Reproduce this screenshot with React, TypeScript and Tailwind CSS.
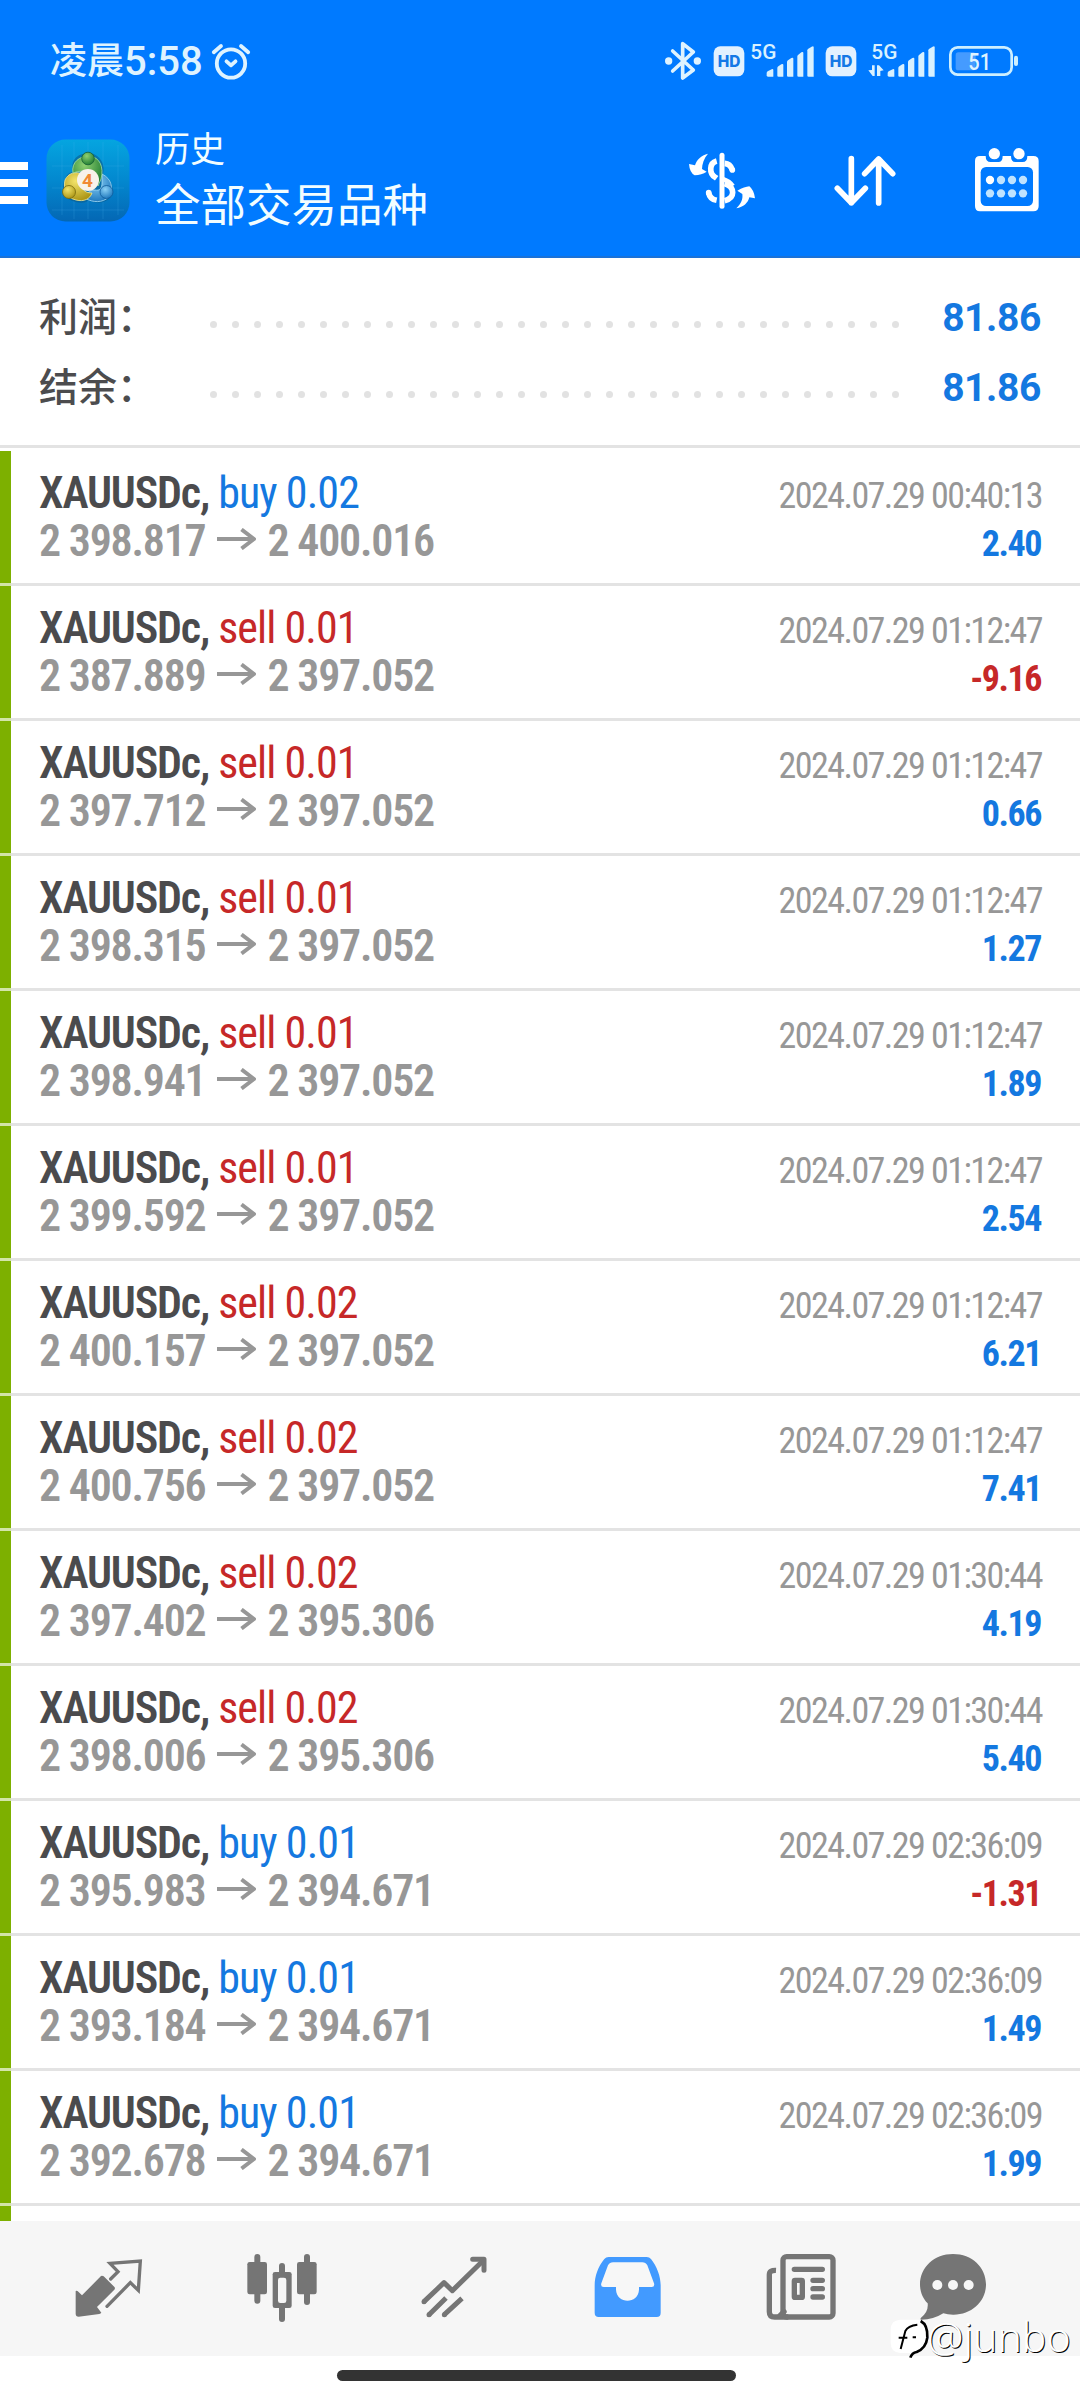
import { ReactNode } from "react";

const deals = [
	{ side: "buy", volume: "0.02", open: "2 398.817", close: "2 400.016", time: "2024.07.29 00:40:13", profit: "2.40" },
	{ side: "sell", volume: "0.01", open: "2 387.889", close: "2 397.052", time: "2024.07.29 01:12:47", profit: "-9.16" },
	{ side: "sell", volume: "0.01", open: "2 397.712", close: "2 397.052", time: "2024.07.29 01:12:47", profit: "0.66" },
	{ side: "sell", volume: "0.01", open: "2 398.315", close: "2 397.052", time: "2024.07.29 01:12:47", profit: "1.27" },
	{ side: "sell", volume: "0.01", open: "2 398.941", close: "2 397.052", time: "2024.07.29 01:12:47", profit: "1.89" },
	{ side: "sell", volume: "0.01", open: "2 399.592", close: "2 397.052", time: "2024.07.29 01:12:47", profit: "2.54" },
	{ side: "sell", volume: "0.02", open: "2 400.157", close: "2 397.052", time: "2024.07.29 01:12:47", profit: "6.21" },
	{ side: "sell", volume: "0.02", open: "2 400.756", close: "2 397.052", time: "2024.07.29 01:12:47", profit: "7.41" },
	{ side: "sell", volume: "0.02", open: "2 397.402", close: "2 395.306", time: "2024.07.29 01:30:44", profit: "4.19" },
	{ side: "sell", volume: "0.02", open: "2 398.006", close: "2 395.306", time: "2024.07.29 01:30:44", profit: "5.40" },
	{ side: "buy", volume: "0.01", open: "2 395.983", close: "2 394.671", time: "2024.07.29 02:36:09", profit: "-1.31" },
	{ side: "buy", volume: "0.01", open: "2 393.184", close: "2 394.671", time: "2024.07.29 02:36:09", profit: "1.49" },
	{ side: "buy", volume: "0.01", open: "2 392.678", close: "2 394.671", time: "2024.07.29 02:36:09", profit: "1.99" },
];

const summary = [
	{ label: "利润：", value: "81.86" },
	{ label: "结余：", value: "81.86" },
];

function AlarmIcon() {
	return (
		<svg className="h-10 w-10" viewBox="0 0 40 40" fill="none" stroke="#def3ff" strokeWidth="3.8" strokeLinecap="round" strokeLinejoin="round">
			<circle cx="20" cy="21.500" r="14.2" />
			<path d="M15.5 19.3l4.5 4 4.5-4M2.8 10.2L10 4M37.2 10.2L30 4" />
		</svg>
	);
}

function BluetoothIcon() {
	return (
		<svg className="h-10 w-[38px]" viewBox="27 18 114 120" fill="none" stroke="#def3ff" strokeWidth="11" strokeLinecap="round" strokeLinejoin="round">
			<path d="M53 48L115 105L83 129V26L115 51L53 108" />
			<circle cx="41" cy="78" r="5.500" fill="#def3ff" />
			<circle cx="127" cy="78" r="5.500" fill="#def3ff" />
		</svg>
	);
}

function HdBadge({ className }: { className: string }) {
	return (
		<svg className={`h-10 w-8 ${className}`} viewBox="0 18 96 120">
			<rect x="2" y="34" width="92" height="90" rx="20" fill="#e2f1ff" />
			<text x="48" y="95" textAnchor="middle" textLength="68" lengthAdjust="spacingAndGlyphs" className="font-['Inter',sans-serif] text-[46px] font-extrabold" fill="#1478e6">
				HD
			</text>
		</svg>
	);
}

function SignalBars() {
	return (
		<g fill="#d8f1ff">
			<path d="M0 121v-7q0-3 3-5l12-6q5-2 5 2v20H4q-4 0-4-4z" />
			<path d="M32 122V99q0-3 3-5l9-6q6-3 6 2v35H36q-4 0-4-3z" />
			<path d="M61 122V81q0-3 3-5l10-7q6-3 6 2v54H65q-4 0-4-3z" />
			<path d="M92 122V64q0-3 3-5l9-7q6-3 6 2v71H96q-4 0-4-3z" />
			<path d="M122 122V46q0-3 3-5l10-6q6-3 6 2v88h-15q-4 0-4-3z" />
		</g>
	);
}

function Signal() {
	return (
		<svg className="ml-[5px] h-10 w-[65px]" viewBox="285 18 195 120">
			<text x="286" y="72" textLength="78" lengthAdjust="spacingAndGlyphs" className="font-['Roboto',sans-serif] text-[60px] font-medium" fill="#d8f1ff">
				5G
			</text>
			<g transform="translate(335 0)">
				<SignalBars />
			</g>
		</svg>
	);
}

function SignalActive() {
	return (
		<svg className="ml-2.5 h-10 w-[69px]" viewBox="636 18 207 120">
			<text x="649" y="72" textLength="78" lengthAdjust="spacingAndGlyphs" className="font-['Roboto',sans-serif] text-[60px] font-medium" fill="#d8f1ff">
				5G
			</text>
			<path d="M640 106l11-1V91h8v32h-6zM666 91h6l14 15-10 2v15h-10z" fill="#d8f1ff" />
			<g transform="translate(698 0)">
				<SignalBars />
			</g>
		</svg>
	);
}

function Battery() {
	return (
		<svg className="ml-3 h-10 w-[71px]" viewBox="879 18 213 120">
			<rect x="886" y="37" width="184" height="82" rx="22" fill="none" stroke="#cdefff" strokeWidth="8" />
			<rect x="902" y="52" width="60" height="54" rx="8" fill="#459bff" />
			<rect x="1077" y="62" width="12" height="31" rx="6" fill="#cdefff" />
			<text x="974" y="105" textAnchor="middle" textLength="68" lengthAdjust="spacingAndGlyphs" className="font-['Roboto',sans-serif] text-[72px] font-medium" fill="#def3ff">
				51
			</text>
		</svg>
	);
}

function AppLogo() {
	return (
		<svg className="ml-[18px] h-[83px] w-[84px]" viewBox="0 0 84 83">
			<defs>
				<linearGradient id="tile" x1="0" y1="0" x2="0" y2="1">
					<stop offset="0" stopColor="#05a5e0" />
					<stop offset="0.5" stopColor="#0388cf" />
					<stop offset="1" stopColor="#0467b4" />
				</linearGradient>
				<radialGradient id="green" cx="0.4" cy="0.3" r="0.8">
					<stop offset="0" stopColor="#8fd070" />
					<stop offset="1" stopColor="#14742c" />
				</radialGradient>
				<radialGradient id="yellow" cx="0.4" cy="0.3" r="0.8">
					<stop offset="0" stopColor="#f3e36a" />
					<stop offset="1" stopColor="#a48d0c" />
				</radialGradient>
				<radialGradient id="blue" cx="0.4" cy="0.3" r="0.8">
					<stop offset="0" stopColor="#8bd0f5" />
					<stop offset="1" stopColor="#126fb8" />
				</radialGradient>
			</defs>
			<rect x="0.5" y="0.5" width="83" height="82" rx="19" fill="url(#tile)" />
			<path d="M6 27h72M6 49h72M6 71h72M16 6v70M28 3v77M42 3v77M57 3v77M72 6v70" stroke="#5cc4f2" strokeOpacity="0.18" fill="none" />
			{/* three figures holding the coin */}
			<path d="M42 42L27 32C24 20 33 14 43 14C54 15 60 26 57 36C67 41 68 50 65 57C60 65 50 65 43 61C38 65 32 64 27 62C17 60 15 48 19 40C21 34 26 32 30 33Z" fill="#0a5b8c" fillOpacity="0.6" />
			<path d="M43 61C36 60 42 50 49 51C54 52 56 49 56 44V35C66 40 67 49 64 56C60 63 50 64 43 61Z" fill="url(#blue)" stroke="#a5dcf7" strokeWidth="0.8" />
			<path d="M19 41C22 34 30 32 36 35L35 45C36 52 41 54 46 54C44 60 38 63 30 61C20 59 17 49 19 41Z" fill="url(#yellow)" stroke="#f4eb9a" strokeWidth="0.8" />
			<path d="M27 34C25 23 34 17 43 17C54 18 58 28 55 40L52 47C51 38 46 32 38 32Q31 32 27 34Z" fill="url(#green)" stroke="#a4dfa0" strokeWidth="0.8" />
			<circle cx="42" cy="19.5" r="6.3" fill="url(#green)" stroke="#175f35" strokeWidth="0.8" />
			<circle cx="23" cy="53" r="6.5" fill="url(#yellow)" stroke="#77690e" strokeWidth="0.8" />
			<circle cx="60.500" cy="53" r="6.5" fill="url(#blue)" stroke="#115c9b" strokeWidth="0.8" />
			<circle cx="42" cy="41" r="11" fill="#f7f2ea" />
			<text x="41.500" y="48" textAnchor="middle" className="font-['Roboto',sans-serif] text-[19px] font-bold" fill="#f08a34">
				4
			</text>
		</svg>
	);
}

function CurrencyIcon() {
	return (
		<svg className="h-[68px] w-[68px]" viewBox="24 18 204 204">
			<path d="M126 46V199" stroke="#fff" strokeWidth="15" strokeLinecap="round" />
			<path d="M110 63C87 69 87 101 106 112L110 115M134 70C146 71 153 78 157 89M134 131C166 142 166 174 134 182M86 158C88 170 95 178 110 181" fill="none" stroke="#fff" strokeWidth="17" />
			<path d="M126 116Q150 124 158 138" fill="none" stroke="#fff" strokeWidth="14" />
			<circle cx="157" cy="90" r="8.500" fill="#fff" />
			<circle cx="86" cy="158" r="8.500" fill="#fff" />
			<path d="M84 41C63 46 50 60 45 76L27 72Q29 98 44 106Q65 105 80 95L66 87C66 72 72 54 84 41Z" fill="#fff" />
			<path d="M169 205C184 190 189 178 187 162L172 152Q194 140 208 139Q222 150 225 175L208 172C204 189 191 201 169 205Z" fill="#fff" />
		</svg>
	);
}

function SortIcon() {
	return (
		<svg className="h-[68px] w-[62px]" viewBox="462 18 186 204" fill="none" stroke="#fff" strokeWidth="17" strokeLinecap="round" strokeLinejoin="round">
			<path d="M514 56V188M472 145L514 188L556 145M596 189V57M554 101L596 57L638 101" />
		</svg>
	);
}

function CalendarIcon() {
	const dots = [930, 963, 996, 1029];
	return (
		<svg className="h-[68px] w-[66px]" viewBox="882 18 198 204">
			<path d="M900 48H917Q917 66 932 66H955Q968 66 968 48H993Q993 66 1006 66H1028Q1042 66 1042 48H1060Q1076 48 1076 63V198Q1076 214 1060 214H900Q885 214 885 198V63Q885 48 900 48Z" fill="#fff" />
			<rect x="902" y="81" width="157" height="117" rx="16" fill="#007aff" />
			<circle cx="943" cy="41" r="17" fill="#fff" />
			<circle cx="1017" cy="41" r="17" fill="#fff" />
			{dots.map((x) => (
				<g key={x} fill="#bfe3ff">
					<circle cx={x} cy="120" r="12.500" fill={x === 930 ? "#fff" : "#bfe3ff"} />
					<circle cx={x} cy="160" r="12.500" />
				</g>
			))}
		</svg>
	);
}

function QuotesIcon() {
	return (
		<svg className="size-[70px]" viewBox="42 24 210 210">
			<path d="M123 93Q127 91 131 94L164 127Q166 131 163 134L111 186L124 203Q122 206 118 207L56 215Q47 215 47 206V138Q51 136 55 140L66 151Z" fill="#757575" />
			<path d="M152 102L174 80L150 55L241 48L235 136L211 113L141 184" fill="none" stroke="#757575" strokeWidth="10" strokeLinejoin="miter" strokeLinecap="round" />
		</svg>
	);
}

function ChartIcon() {
	return (
		<svg className="size-[70px]" viewBox="558 24 210 210">
			<g fill="#757575">
				<rect x="559" y="51" width="59" height="97" rx="7" />
				<rect x="580" y="27" width="18" height="149" rx="9" />
				<rect x="708" y="51" width="59" height="97" rx="7" />
				<rect x="729" y="27" width="18" height="153" rx="9" />
				<rect x="635" y="81" width="57" height="108" rx="7" />
				<rect x="654" y="54" width="18" height="177" rx="9" />
			</g>
			<rect x="651" y="98" width="25" height="76" rx="7" fill="#f6f6f6" />
		</svg>
	);
}

function TradeIcon() {
	return (
		<svg className="size-[70px]" viewBox="1080 24 210 210" fill="none" stroke="#757575" strokeWidth="15" strokeLinejoin="round">
			<path d="M1092 170L1152 113L1177 137L1272 44M1107 209L1158 159M1153 209L1206 160" />
			<path d="M1238 43H1272V76" strokeLinecap="round" />
			<g fill="#757575" stroke="none">
				<circle cx="1092" cy="170" r="7.500" />
				<circle cx="1107" cy="209" r="7.500" />
				<circle cx="1153" cy="209" r="7.500" />
			</g>
		</svg>
	);
}

function HistoryIcon() {
	return (
		<svg className="size-[70px]" viewBox="39 24 210 210">
			<path d="M86 36H200Q208 36 213 42C231 64 242 95 242 121V203Q242 216 230 216H56Q44 216 44 203V121C44 95 54 64 73 42Q78 36 86 36Z" fill="#429aff" />
			<path d="M99 52H187Q197 52 202 61L222 115Q225 126 215 126H177V134C175 178 110 178 108 134V126H71Q61 126 64 115L84 61Q89 52 99 52Z" fill="#f7f7f7" />
		</svg>
	);
}

function NewsIcon() {
	return (
		<svg className="size-[70px]" viewBox="558 24 210 210" fill="none" stroke="#757575" strokeWidth="16" strokeLinecap="round">
			<rect x="609" y="35" width="150" height="181" rx="11" />
			<path d="M588 76Q568 75 568 89V200Q568 216 584 216H625" strokeLinecap="butt" />
			<path d="M600 212L612 200M643 73H727M699 106H727M699 131H727M699 156H727" />
			<rect x="643" y="106" width="24" height="51" rx="2" />
		</svg>
	);
}

function MessagesIcon() {
	return (
		<svg className="size-[70px]" viewBox="114 24 210 210">
			<path d="M219 27C276 27 318 67 318 118C318 171 273 210 219 209Q203 209 190 205Q160 224 124 224Q119 223 123 218Q146 200 143 175C129 161 120 141 120 118C120 67 163 27 219 27Z" fill="#757575" />
			<g fill="#f7f7f7">
				<circle cx="172" cy="120" r="15" />
				<circle cx="219" cy="120" r="15" />
				<circle cx="266" cy="120" r="15" />
			</g>
		</svg>
	);
}

function Arrow() {
	return (
		<svg className="mr-[11px] ml-3 inline-block h-[22px] w-[39px] align-[6px]" viewBox="0 0 39 22" fill="none" stroke="#979797" strokeWidth="4">
			<path d="M0 11H37M24.500 1.500L37 11L24.500 20.500" strokeLinejoin="round" />
		</svg>
	);
}

function NavItem({ children, last }: { children: ReactNode; last?: boolean }) {
	return (
		<div className={`flex h-full items-center justify-center ${last ? "w-[132px]" : "w-[173px]"}`}>{children}</div>
	);
}

function Watermark() {
	return (
		<div className="absolute top-[2313px] left-[890px] flex items-center">
			<svg className="h-[48px] w-[40px]" viewBox="0 0 120 144">
				<path d="M30 20H88Q116 24 114 66Q112 108 76 120L60 132V120H30Q2 118 2 90V50Q2 22 30 20Z" fill="#fff" />
				<path d="M32 108L46 54Q54 38 82 35M26 74H52M68 73H78" fill="none" stroke="#000" strokeWidth="6" />
				<path d="M92 24Q114 36 112 74Q108 106 80 117Q66 119 61 134" fill="none" stroke="#000" strokeWidth="8" />
			</svg>
			<span className="-mt-[2px] -ml-[3px] font-['Noto_Sans',sans-serif] text-[41px] leading-[48px] font-light text-white [text-shadow:1px_1px_0_#000]">
				@junbo
			</span>
		</div>
	);
}

function App() {
	return (
		<div className="relative flex h-[2400px] w-[1080px] flex-col overflow-hidden bg-white font-['Roboto','Noto_Sans_CJK_SC',sans-serif]">
			<header className="h-[258px] shrink-0 border-b-2 border-[#1a72d8] bg-[#007aff] pt-[41px]">
				<div className="flex h-10 items-center justify-between pr-[61px] pl-[50px] text-[#def3ff]">
					<div className="mt-[2px] flex items-center font-medium">
						<span className="text-[37px] leading-10">凌晨</span>
						<span className="text-[40px] leading-10">5:58</span>
						<span className="ml-2">
							<AlarmIcon />
						</span>
					</div>
					<div className="flex items-center">
						<BluetoothIcon />
						<HdBadge className="ml-[11px]" />
						<Signal />
						<HdBadge className="ml-2.5" />
						<SignalActive />
						<Battery />
					</div>
				</div>

				<div className="mt-[44px] flex h-[110px] items-center pr-10 text-[#f2fdff]">
					<div className="mt-1.5 flex flex-col gap-[9px]">
						<span className="h-[8px] w-7 bg-white" />
						<span className="h-[8px] w-7 bg-white" />
						<span className="h-[8px] w-7 bg-white" />
					</div>
					<AppLogo />
					<div className="mb-1.5 ml-[25px] flex flex-1 flex-col font-['Noto_Sans_CJK_SC',sans-serif]">
						<span className="text-[35px] leading-[50px]">历史</span>
						<span className="text-[45.5px] leading-[60px]">全部交易品种</span>
					</div>
					<div className="flex items-center gap-[78px]">
						<CurrencyIcon />
						<SortIcon />
						<CalendarIcon />
					</div>
				</div>
			</header>

			<section className="flex h-[190px] shrink-0 flex-col border-b-[3px] border-[#e3e3e3] pt-[25px]">
				{summary.map(({ label, value }) => (
					<div key={label} className="flex h-[70px] items-center pr-[39px] pl-[39px]">
						<span className="mb-2 w-[171px] font-['Noto_Sans_CJK_SC',sans-serif] text-[39px] leading-[62px] font-medium text-[#4c4c4e]">
							{label}
						</span>
						<div className="mt-3 flex w-[689px] justify-between">
							{Array.from({ length: 32 }, (_, i) => (
								<span key={i} className="size-[7px] rounded-full bg-[#e2e2e2]" />
							))}
						</div>
						<span className="ml-auto text-[39px] font-bold tracking-[-0.01em] text-[#1478e0]">{value}</span>
					</div>
				))}
			</section>

			<main className="h-[1773px] shrink-0 overflow-hidden pt-[3px] [font-stretch:75%]">
				{deals.map(({ side, volume, open, close, time, profit }, i) => (
					<div key={i} className="flex h-[135px]">
						<div className="w-[11px] border-b-[3px] border-[#d3e5a8] bg-[#7db000]" />
						<div className="flex-1 border-b-[3px] border-[#e3e3e3] pt-[18px] pr-[38px] pl-[28px]">
							<div className="flex h-12 items-baseline justify-between leading-[48px]">
								<span className="text-[44px] tracking-[-0.021em]">
									<span className="font-semibold tracking-[-0.026em] text-[#4b4b4d]">XAUUSDc, </span>
									<span className={side === "buy" ? "text-[#1478e0]" : "text-[#c62828]"}>
										{side} {volume}
									</span>
								</span>
								<span className="text-[36px] tracking-[-0.043em] text-[#979797]">{time}</span>
							</div>
							<div className="flex h-12 items-baseline justify-between leading-[48px]">
								<span className="text-[44px] font-semibold tracking-[-0.028em] text-[#979797]">
									{open}
									<Arrow />
									{close}
								</span>
								<span
									className={`mr-px text-[36px] font-bold tracking-[-0.04em] ${
										profit.startsWith("-") ? "text-[#c62828]" : "text-[#1478e0]"
									}`}
								>
									{profit}
								</span>
							</div>
						</div>
					</div>
				))}
				<div className="h-5 w-[11px] bg-[#7db000]" />
			</main>

			<nav className="flex h-[135px] shrink-0 items-center bg-[#f6f6f6] pb-px pl-[22px]">
				<NavItem><QuotesIcon /></NavItem>
				<NavItem><ChartIcon /></NavItem>
				<NavItem><TradeIcon /></NavItem>
				<NavItem><HistoryIcon /></NavItem>
				<NavItem><NewsIcon /></NavItem>
				<NavItem last><MessagesIcon /></NavItem>
			</nav>
			<div className="mt-[14px] ml-[337px] h-[11px] w-[399px] rounded-full bg-[#333]" />

			<Watermark />
		</div>
	);
}

export default App;
